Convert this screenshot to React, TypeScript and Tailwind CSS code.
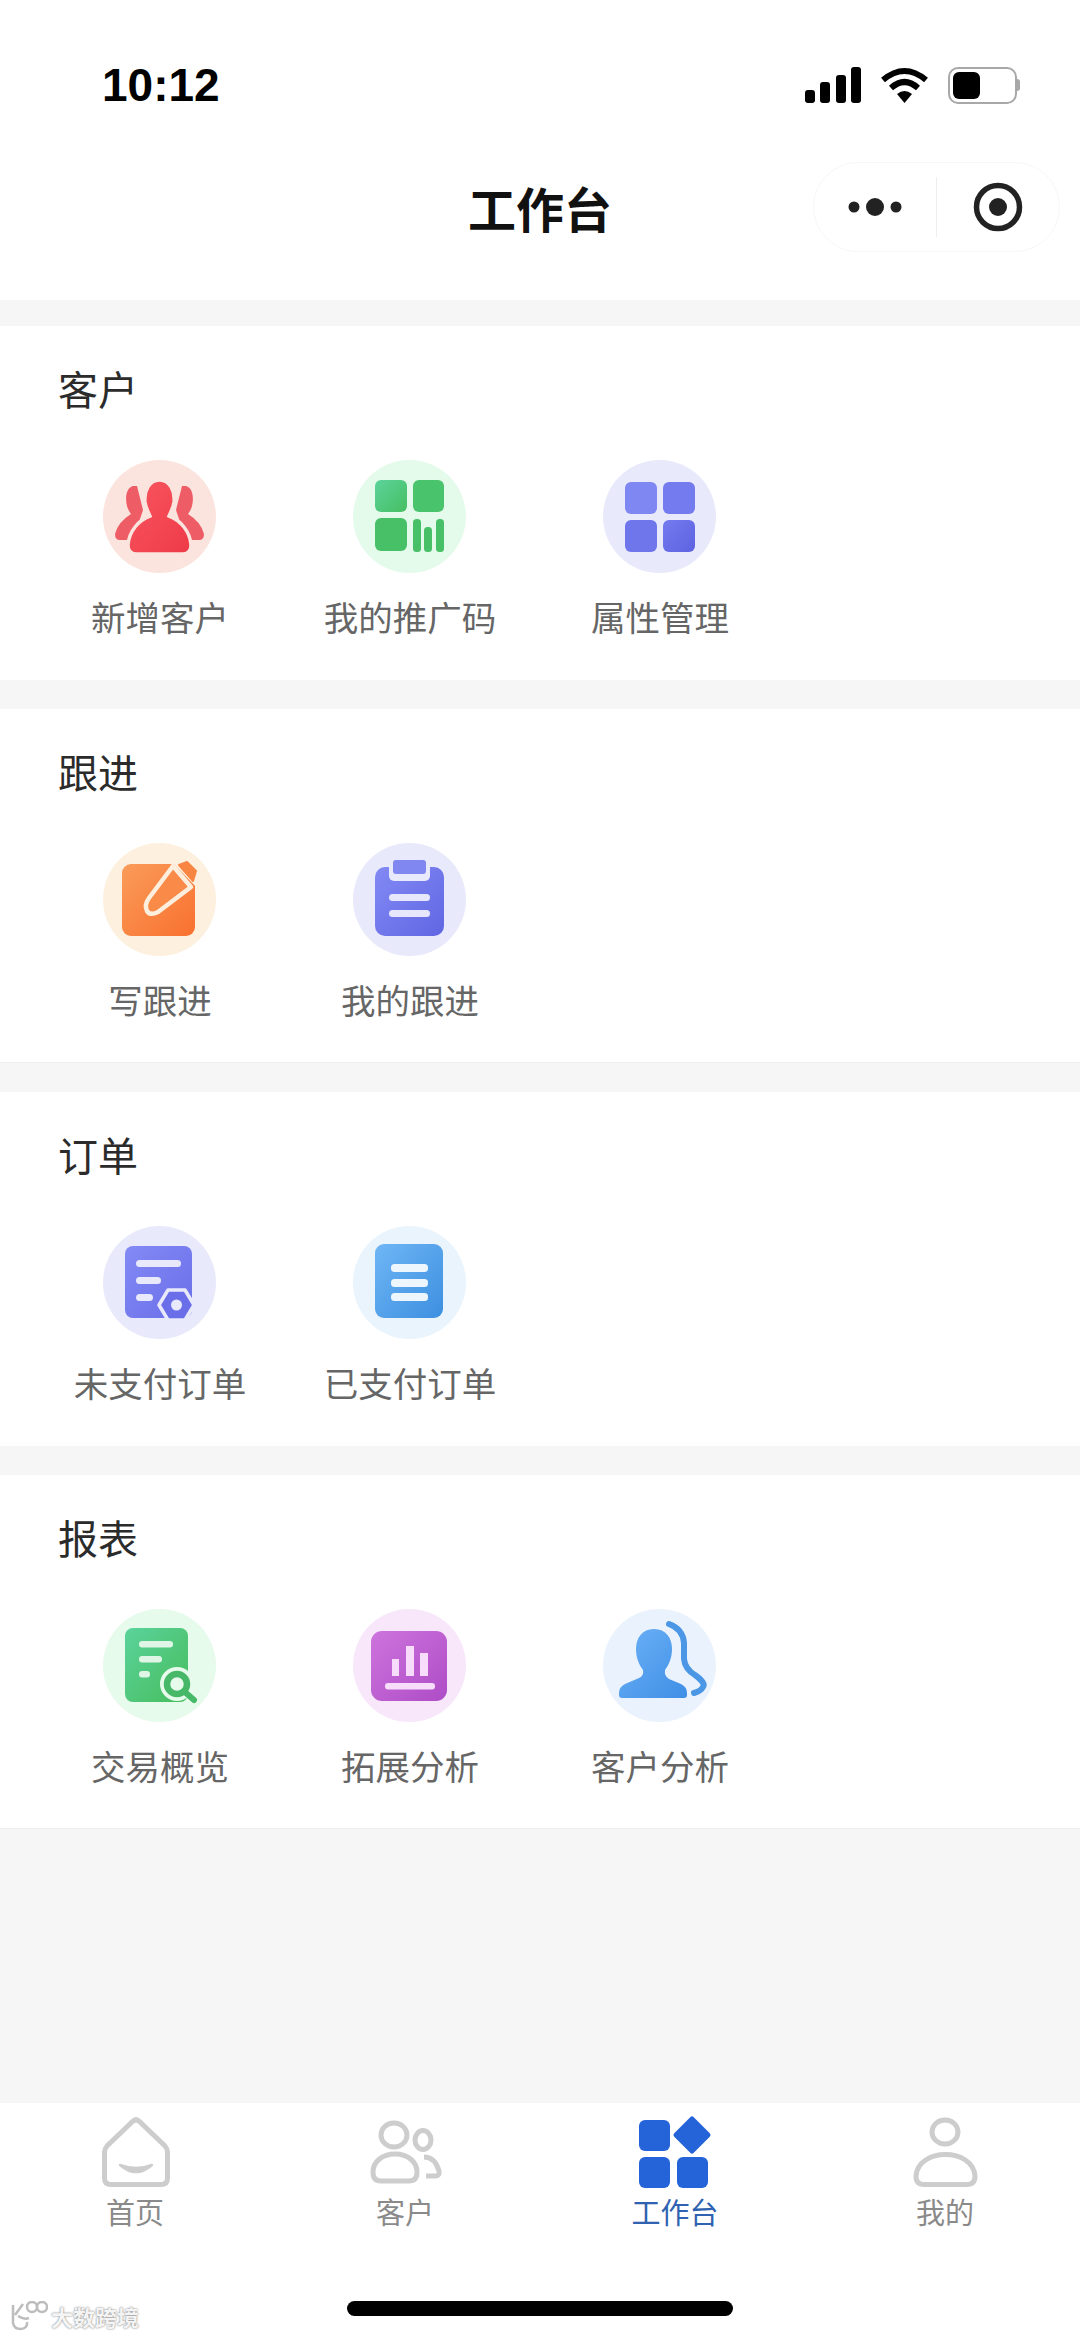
const CJK = "font-['Noto_Sans_CJK_SC','Noto_Sans',sans-serif]";

function Grad({ id, from, to }: { id: string; from: string; to: string }) {
  return (
    <defs>
      <linearGradient id={id} x1="0" y1="0" x2="1" y2="1">
        <stop offset="0" stopColor={from} />
        <stop offset="1" stopColor={to} />
      </linearGradient>
    </defs>
  );
}

function Disc({ bg, children }: { bg: string; children: React.ReactNode }) {
  return (
    <svg width="114" height="114" viewBox="0 0 114 114" className="block shrink-0">
      <circle cx="56.5" cy="56.5" r="56.5" fill={bg} />
      {children}
    </svg>
  );
}

const IconNew = () => (
  <Disc bg="#fbe4dd">
    <Grad id="a1" from="#f9565f" to="#ee3a48" />
    <path d="M30 26 C23 28 22 38 24 46 Q25 50 28 54 Q15 62 12 74 Q12 80 17 80 L30 80 L40 50 L34 26Z" fill="#ee5c66" />
    <path d="M83 26 C90 28 91 38 89 46 Q88 50 85 54 Q98 62 101 74 Q101 80 96 80 L83 80 L73 50 L79 26Z" fill="#ee5c66" />
    <path d="M56.5 20 C67 20 72 31 71 42 C70 49 67 53 66 56 C77 60 87 71 88 85 Q88 94 80 94 L33 94 Q25 94 25 85 C26 71 36 60 47 56 C46 53 43 49 42 42 C41 31 46 20 56.5 20Z" fill="url(#a1)" stroke="#fbe4dd" strokeWidth="3.5" />
  </Disc>
);
const IconQr = () => (
  <Disc bg="#e4fbeb">
    <Grad id="a2" from="#5cd39a" to="#46bf62" />
    <rect x="22" y="20" width="32" height="32" rx="6" fill="url(#a2)" />
    <rect x="60" y="20" width="31" height="32" rx="6" fill="#49c36c" />
    <rect x="22" y="58" width="32" height="33" rx="6" fill="#48c068" />
    <rect x="60" y="59" width="8" height="33" rx="3.5" fill="#48c068" />
    <rect x="71" y="67" width="8" height="25" rx="3.5" fill="#48c068" />
    <rect x="83" y="59" width="8" height="33" rx="3.5" fill="#48c068" />
  </Disc>
);
const IconAttr = () => (
  <Disc bg="#e8e9fb">
    <Grad id="a3" from="#747bef" to="#5e62e0" />
    <rect x="22" y="22" width="32" height="32" rx="6" fill="#7f87f3" />
    <rect x="60" y="22" width="32" height="32" rx="6" fill="#747bef" />
    <rect x="22" y="60" width="32" height="32" rx="6" fill="#6f75ea" />
    <rect x="60" y="60" width="32" height="32" rx="6" fill="url(#a3)" />
  </Disc>
);
const IconWrite = () => (
  <Disc bg="#fdf0df">
    <Grad id="a4" from="#fa9c5a" to="#f9702f" />
    <rect x="19" y="21" width="73" height="72" rx="9" fill="url(#a4)" />
    <path d="M68 18 L96 18 L96 47Z" fill="#fdf0df" />
    <path d="M70 23 L46 55 Q41 62 44 68 Q47 73 55 69 L88 44Z" fill="#f98a48" stroke="#fdeedd" strokeWidth="4.5" strokeLinejoin="round" />
    <path d="M76 22 L84 19 L93 28 L90 38Z" fill="#f98543" strokeLinejoin="round" stroke="#f98543" strokeWidth="2" />
  </Disc>
);
const IconMine = () => (
  <Disc bg="#e8e9fb">
    <Grad id="a5" from="#838af5" to="#6066e2" />
    <rect x="22" y="24" width="69" height="69" rx="10" fill="url(#a5)" />
    <rect x="36" y="14" width="41" height="24" rx="5" fill="#e8e9fb" />
    <rect x="40" y="17" width="33" height="14" rx="3" fill="#8087f0" />
    <rect x="36" y="51" width="41" height="7" rx="3.5" fill="#e6e7fb" />
    <rect x="36" y="67" width="41" height="7" rx="3.5" fill="#e6e7fb" />
  </Disc>
);
const IconUnpaid = () => (
  <Disc bg="#e8e9fb">
    <Grad id="a6" from="#838af5" to="#6a6ee8" />
    <rect x="22" y="20" width="67" height="72" rx="8" fill="url(#a6)" />
    <rect x="33" y="34" width="45" height="7" rx="3.5" fill="#e8e9fb" />
    <rect x="33" y="51" width="25" height="7" rx="3.5" fill="#e8e9fb" />
    <rect x="33" y="68" width="17" height="7" rx="3.5" fill="#e8e9fb" />
    <path d="M65 64 H82 L91 79 L82 94 H65 L56 79Z" fill="#6a6ee8" stroke="#e8e9fb" strokeWidth="3.5" strokeLinejoin="round" />
    <circle cx="73.5" cy="79" r="5.5" fill="#e8e9fb" />
  </Disc>
);
const IconPaid = () => (
  <Disc bg="#e9f4fd">
    <Grad id="a7" from="#6fb6f5" to="#3c8fe0" />
    <rect x="22" y="18" width="68" height="74" rx="9" fill="url(#a7)" />
    <rect x="38" y="38" width="37" height="8" rx="3.5" fill="#edf5fd" />
    <rect x="38" y="53" width="37" height="8" rx="3.5" fill="#edf5fd" />
    <rect x="38" y="67" width="37" height="8" rx="3.5" fill="#edf5fd" />
  </Disc>
);
const IconDeal = () => (
  <Disc bg="#e6fbeb">
    <Grad id="a8" from="#5bd39c" to="#46bd5c" />
    <rect x="22" y="19" width="63" height="74" rx="8" fill="url(#a8)" />
    <rect x="36" y="32" width="34" height="6.5" rx="3.2" fill="#dff6e6" />
    <rect x="36" y="47" width="23" height="6.5" rx="3.2" fill="#dff6e6" />
    <rect x="36" y="62" width="11" height="6.5" rx="3.2" fill="#dff6e6" />
    <circle cx="74" cy="75" r="17" fill="#e6fbeb" />
    <path d="M83 84 L91 91" stroke="#46b868" strokeWidth="6" strokeLinecap="round" />
    <circle cx="74" cy="75" r="10" fill="#e6fbeb" stroke="#46b868" strokeWidth="6.5" />
  </Disc>
);
const IconExpand = () => (
  <Disc bg="#f8e6fb">
    <Grad id="a9" from="#cd74dd" to="#ae4cc6" />
    <rect x="18" y="22" width="76" height="70" rx="11" fill="url(#a9)" />
    <rect x="39" y="50" width="7" height="17" fill="#f7dcfb" />
    <rect x="53" y="37" width="8" height="30" fill="#f7dcfb" />
    <rect x="67" y="44" width="8" height="23" fill="#f7dcfb" />
    <rect x="32" y="74" width="50" height="6.5" rx="3" fill="#f7dcfb" />
  </Disc>
);
const IconAnalyze = () => (
  <Disc bg="#eaf3fd">
    <Grad id="a10" from="#6cb1f6" to="#3f8fe6" />
    <path d="M66 15 Q80 20 81 34 L81 50 Q82 60 92 66 Q103 74 100 78 Q98 82 91 84" fill="none" stroke="#4b97e6" strokeWidth="6" strokeLinecap="round" />
    <path d="M51 20 C63 20 69 29 69 40 C69 50 65 57 62 61 Q61 67 66 70 L78 75 Q84 78 84 84 L84 86 Q84 89 81 89 L19 89 Q16 89 16 86 L16 84 Q16 78 22 75 L36 69 Q41 67 40 61 C37 57 33 50 33 40 C33 29 39 20 51 20Z" fill="url(#a10)" />
  </Disc>
);

const sections: { title: string; items: [string, React.ComponentType][]; line?: boolean }[] = [
  { title: "客户", items: [["新增客户", IconNew], ["我的推广码", IconQr], ["属性管理", IconAttr]] },
  { title: "跟进", items: [["写跟进", IconWrite], ["我的跟进", IconMine]], line: true },
  { title: "订单", items: [["未支付订单", IconUnpaid], ["已支付订单", IconPaid]] },
  { title: "报表", items: [["交易概览", IconDeal], ["拓展分析", IconExpand], ["客户分析", IconAnalyze]], line: true },
];

const TabHome = () => (
  <svg width="80" height="76" viewBox="0 0 80 76" fill="none" stroke="#cdcdcd" strokeWidth="5">
    <path d="M37.5 6.5 Q41 3 44.5 6.5 L70 31 Q72.5 34 72.5 37 V63 Q72.5 69.5 66 69.5 H16 Q9.5 69.5 9.5 63 V37 Q9.5 34 12 31 Z" />
    <path d="M25 50 Q41 64 57 50 Q41 56 25 50Z" strokeWidth="2.5" fill="#cdcdcd" strokeLinejoin="round" />
  </svg>
);
const TabCustomer = () => (
  <svg width="80" height="76" viewBox="0 0 80 76" fill="none" stroke="#cdcdcd" strokeWidth="5">
    <ellipse cx="29" cy="20" rx="13" ry="12" />
    <ellipse cx="58" cy="25" rx="8" ry="9.5" />
    <path d="M8 57 C8 47 17 39 30 39 C43 39 52 47 52 57 Q52 66 44 66 H16 Q8 66 8 57Z" />
    <path d="M59 42 Q70 42 74 56 Q75 61 70 61 H61" />
  </svg>
);
const TabWork = () => (
  <svg width="80" height="76" viewBox="0 0 80 76" fill="#2563d9">
    <rect x="4" y="5" width="31" height="31" rx="6" />
    <rect x="4" y="42" width="31" height="31" rx="6" />
    <rect x="42" y="42" width="31" height="31" rx="6" />
    <path d="M57 4 L73 20 L57 36 L41 20Z" stroke="#2563d9" strokeWidth="5" strokeLinejoin="round" />
  </svg>
);
const TabMe = () => (
  <svg width="80" height="76" viewBox="0 0 80 76" fill="none" stroke="#cdcdcd" strokeWidth="5">
    <ellipse cx="40" cy="17" rx="13" ry="12" />
    <path d="M11 61 C12 47 26 39.5 40.5 39.5 C55 39.5 69 47 70 61 Q70 69.5 62 69.5 H19 Q11 69.5 11 61 Z" />
  </svg>
);

const tabs: [string, React.ComponentType, boolean][] = [
  ["首页", TabHome, false],
  ["客户", TabCustomer, false],
  ["工作台", TabWork, true],
  ["我的", TabMe, false],
];

export default function App() {
  return (
    <div className={`${CJK} w-[1080px] h-[2339px] bg-[#f6f6f6] flex flex-col overflow-hidden`}>
      <header className="bg-white h-[300px] shrink-0">
        <div className="h-[162px] flex items-start justify-between pt-[60px] pl-[102px] pr-[60px]">
          <span className="font-['Liberation_Sans',sans-serif] font-bold text-[46px] leading-[50px] text-black">10:12</span>
          <div className="flex items-center gap-[19px] h-[50px]">
            <svg width="56" height="36" viewBox="0 0 56 36" fill="#000">
              <rect x="0" y="23" width="10" height="13" rx="3" />
              <rect x="15" y="15" width="10" height="21" rx="3" />
              <rect x="31" y="8" width="10" height="28" rx="3" />
              <rect x="46" y="0" width="10" height="36" rx="3" />
            </svg>
            <svg width="49" height="36" viewBox="0 0 49 36" fill="none" stroke="#000" strokeWidth="6">
              <path d="M3 13 Q24.5 -5 46 13" />
              <path d="M11 21 Q24.5 9 38 21" />
              <path d="M24.5 36 L17 27 Q24.5 21 32 27Z" fill="#000" stroke="none" />
            </svg>
            <div className="flex items-center">
              <div className="w-[69px] h-[37px] rounded-[10px] border-2 border-[#a8a8a8] p-[3px]">
                <div className="w-[27px] h-full rounded-[6px] bg-black" />
              </div>
              <div className="w-[3px] h-[12px] rounded-r-full bg-[#a8a8a8]" />
            </div>
          </div>
        </div>
        <div className="h-[90px] grid grid-cols-[1fr_auto_1fr] items-center px-[20px]">
          <div />
          <h1 className="font-bold text-[48px] leading-[60px] text-[#111]">工作台</h1>
          <div className="justify-self-end w-[247px] h-[90px] rounded-full border border-[#f7f7f7] flex items-center">
            <div className="w-[122px] flex justify-center">
              <svg width="54" height="20" viewBox="0 0 54 20" fill="#222">
                <circle cx="6" cy="10" r="5.5" />
                <circle cx="27" cy="10" r="9" />
                <circle cx="48" cy="10" r="5.5" />
              </svg>
            </div>
            <div className="w-px h-[60px] bg-[#eeeeee]" />
            <div className="flex-1 flex justify-center">
              <svg width="50" height="50" viewBox="0 0 50 50">
                <circle cx="25" cy="25" r="21.5" fill="none" stroke="#222" strokeWidth="5.5" />
                <circle cx="25" cy="25" r="9" fill="#222" />
              </svg>
            </div>
          </div>
        </div>
      </header>

      <main className="flex flex-col gap-[29px] pt-[26px]">
        {sections.map((s) => (
          <section key={s.title} className={`bg-white h-[354px] pt-[35px] ${s.line ? "border-b border-[#eeeeee]" : ""}`}>
            <h2 className="pl-[58px] text-[40px] leading-[54px] font-normal text-[#2b2b2b]">{s.title}</h2>
            <div className="flex pl-[35px] mt-[45px]">
              {s.items.map(([label, Icon]) => (
                <div key={label} className="w-[250px] flex flex-col items-center">
                  <Icon />
                  <span className="mt-[18px] text-[34.5px] leading-[48px] text-[#666666] whitespace-nowrap">{label}</span>
                </div>
              ))}
            </div>
          </section>
        ))}
      </main>

      <footer className="relative mt-auto h-[236px] bg-white shrink-0 pt-[12px]">
        <div className="grid grid-cols-4">
          {tabs.map(([label, Icon, active]) => (
            <div key={label} className="flex flex-col items-center">
              <Icon />
              <span className={`mt-[2px] text-[29px] leading-[36px] ${active ? "text-[#2f62b0]" : "text-[#8a8a8a]"}`}>{label}</span>
            </div>
          ))}
        </div>
        <div className="mt-[72px] mx-auto w-[386px] h-[15px] rounded-full bg-black" />
        <div className="absolute left-[10px] top-[198px] flex items-center gap-[3px]">
          <svg width="38" height="30" viewBox="0 0 38 30" fill="none" stroke="#bdbdbd" strokeWidth="2.5">
            <path d="M3 4 L3 22 Q4 28 11 28 Q18 27 17 21 M5 14 L13 3 M8 15 Q14 19 19 17" />
            <circle cx="22" cy="6" r="5" />
            <circle cx="32" cy="6" r="5" />
          </svg>
          <span className="text-[22px] leading-[28px] font-bold text-[#f4f4f4] [text-shadow:0_0_2px_#666]">大数跨境</span>
        </div>
      </footer>
    </div>
  );
}
